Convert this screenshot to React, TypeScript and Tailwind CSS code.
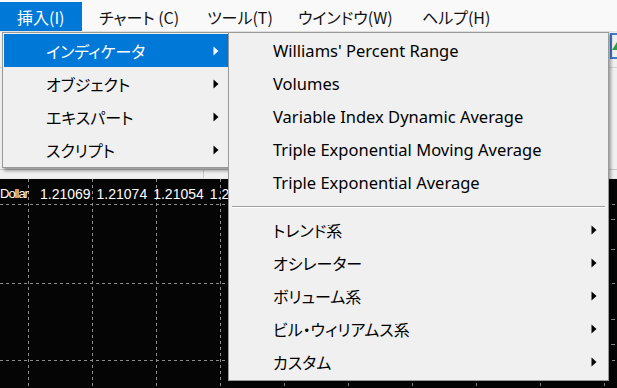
import React from 'react'

const jp = "font-['Noto_Sans_CJK_JP',sans-serif] [font-feature-settings:'palt']"
const en = "font-['Noto_Sans','Noto_Sans_CJK_JP',sans-serif]"

const bar = [
  { label: '挿入(I)', w: 'w-[82px]', active: true },
  { label: 'チャート (C)', w: 'w-[108px]' },
  { label: 'ツール(T)', w: 'w-[91px]' },
  { label: 'ウインドウ(W)', w: 'w-[124px]' },
  { label: 'ヘルプ(H)', w: 'w-[100px]' },
]

const insertItems = ['インディケータ', 'オブジェクト', 'エキスパート', 'スクリプト']

const indicators = [
  "Williams' Percent Range",
  'Volumes',
  'Variable Index Dynamic Average',
  'Triple Exponential Moving Average',
  'Triple Exponential Average',
]

const groups = ['トレンド系', 'オシレーター', 'ボリューム系', 'ビル・ウィリアムス系', 'カスタム']

function Arrow({ white }: { white?: boolean }) {
  return (
    <svg width="6" height="10" viewBox="0 0 6 10" className="shrink-0">
      <path d="M0.5 0.5 L5.5 5 L0.5 9.5 Z" fill={white ? '#ffffff' : '#000000'} />
    </svg>
  )
}

function ChartGrid() {
  const xs = Array.from({ length: 10 }, (_, i) => 28 + i * 64)
  const ys = [25, 104, 181]
  return (
    <svg width="617" height="209" className="absolute left-0 top-0">
      {xs.map((x) => (
        <line key={x} x1={x + 0.5} y1={0} x2={x + 0.5} y2={209} stroke="#8c8c8c" strokeDasharray="3 3" />
      ))}
      {ys.map((y) => (
        <line key={y} x1={0} y1={y + 0.5} x2={617} y2={y + 0.5} stroke="#8c8c8c" strokeDasharray="3 3" />
      ))}
      {[40, 70, 140, 165].map((y) => (
        <line key={y} x1={611} y1={y + 0.5} x2={615} y2={y + 0.5} stroke="#8c8c8c" />
      ))}
    </svg>
  )
}

export default function App() {
  return (
    <div className="relative w-[617px] h-[388px] overflow-hidden bg-[#f0f0f0] text-black">
      {/* menu bar */}
      <div className="h-[32px] bg-[#f9f9f9] flex items-start pt-[2px] border-b border-[#e3e3e3]">
        {bar.map((b) => (
          <div
            key={b.label}
            className={`${b.w} h-[29px] pl-[17px] flex items-center text-[16px] ${jp} ${
              b.active ? 'bg-[#0078d7] text-white' : 'text-[#111]'
            }`}
          >
            {b.label}
          </div>
        ))}
      </div>

      {/* toolbars */}
      <div className="h-[146px] flex flex-col">
        <div className="h-[36px] border-b border-[#d4d4d4] flex justify-end items-start pt-[1px]">
          <div className="w-[7px] h-[26px] border-l-2 border-t-2 border-b-2 border-[#3d7bd0] flex items-center justify-end">
            <svg width="5" height="8" viewBox="0 0 5 8">
              <path d="M0 8 L5 0 L5 8 Z" fill="#2ea043" />
            </svg>
          </div>
        </div>
        <div className="flex-1 border-b border-[#c8c8c8]" />
        <div className="h-[8px] flex">
          <div className="w-[204px] border-r border-[#c8c8c8]" />
        </div>
      </div>

      {/* chart */}
      <div className="relative h-[210px] bg-[#050505] border-t border-[#e8e8e8]">
        <ChartGrid />
        <div className="relative flex gap-[6px] pt-[7px] text-[14px] leading-[16px] text-white font-['Liberation_Sans',sans-serif]">
          <span className="text-[13px] tracking-[-1px]">Dollar</span>
          <span className="ml-[6px]">1.21069</span>
          <span>1.21074</span>
          <span>1.21054</span>
          <span>1.21060</span>
        </div>
      </div>

      {/* 挿入 dropdown */}
      <div className="absolute left-[2px] top-[32px] w-[228px] bg-[#f0f0f0] border border-[#9a9a9a] py-[1px] shadow-[2px_3px_3px_rgba(0,0,0,0.35)]">
        {insertItems.map((t, i) => (
          <div
            key={t}
            className={`h-[33px] mx-[1px] pl-[42px] pr-[9px] flex items-center justify-between text-[16px] ${jp} ${
              i === 0 ? 'bg-[#0078d7] text-white' : ''
            }`}
          >
            <span>{t}</span>
            <Arrow white={i === 0} />
          </div>
        ))}
      </div>

      {/* indicator submenu */}
      <div className="absolute left-[228px] top-[32px] w-[381px] bg-[#f0f0f0] border border-[#9a9a9a] py-[2px] shadow-[2px_2px_3px_rgba(0,0,0,0.35)]">
        {indicators.map((t) => (
          <div key={t} className={`h-[33px] pl-[44px] flex items-center text-[16.5px] ${en}`}>
            {t}
          </div>
        ))}
        <div className="h-[13px] flex items-center px-[3px]">
          <div className="w-full h-[2px] border-t border-[#a0a0a0] border-b border-b-white" />
        </div>
        {groups.map((t) => (
          <div key={t} className={`h-[33px] pl-[44px] pr-[11px] flex items-center justify-between text-[16px] ${jp}`}>
            <span>{t}</span>
            <Arrow />
          </div>
        ))}
      </div>
    </div>
  )
}
